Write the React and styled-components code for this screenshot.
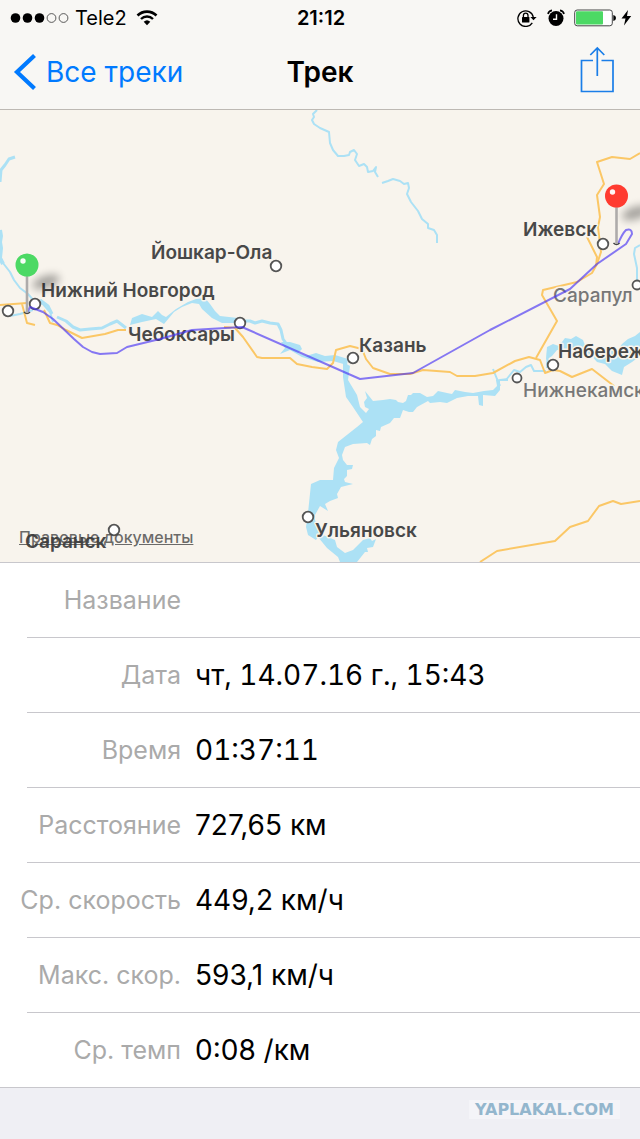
import React from 'react'
import styled, { createGlobalStyle } from 'styled-components'

const GlobalStyle = createGlobalStyle`
    * {
        box-sizing: border-box;
    }
    body {
        margin: 0;
        background: #efeff4;
        color: #000;
        font-family: Inter, "Liberation Sans", sans-serif;
    }
`

const rivers = [
    { width: 3, d: 'M15 47 L9 49 L5 55 L1 60 L0 72' },
    { width: 4, d: 'M0 120 L1 126 L0 132 L1 138 L0 148 L3 154' },
    { width: 2, d: 'M3 153 L10 162 L14 170 L20 178 L28 184 L34 191 L43 194 L50 202 L53 212 M10 206 L20 204 L33 200' },
    { width: 3, d: 'M40 190 L48 196 L52 204 M57 207 L66 211 L73 217 L80 220 L90 219 L102 218 L110 214 L117 211 L126 218' },
    { width: 2, d: 'M317 0 L313 4 L314 7 L312 10 L314 14 L320 18 L329 22 L330 33 L333 40 L338 46 L344 46 L349 45 L350 42 L354 40 L357 44 L355 50 L359 56 L364 54 L367 57 L368 62 L373 61 L376 57 L375 62 L378 67' },
    { width: 2, d: 'M382 73 L388 71 L393 69 L400 71 L404 74 L408 73 L409 78 L407 84 L411 92 L418 101 L422 109 L428 114 L428 118 L434 120 L437 125 L437 133' },
    { width: 3, d: 'M240 211 L250 211 L255 213 L262 211 L270 213 L278 214 L281 220 L283 229 L288 236' },
    { width: 2, d: 'M493 259 L497 269 L500 276 M506 270 L514 260 L520 262 L526 257 L531 255 L534 261 L546 261 M548 240 L547 258' },
    { width: 2, d: 'M640 135 L635 138 L634 144 L637 158 L637 171' },
]

const reservoirs = [
    'M130 215 L132 208 L142 204 L152 207 L158 201 L162 205 L166 207 L176 199 L188 192 L196 189 L205 188 L210 194 L215 201 L220 206 L238 208 L242 213 L222 213 L212 208 L202 199 L199 194 L192 193 L182 197 L174 202 L164 214 L156 209 L142 212 Z',
    'M280 244 L285 238 L281 232 L290 232 L300 235 L302 239 L298 243 L306 246 L316 243 L325 246 L335 245 L348 249 L347 255 L333 251 L318 252 L302 247 L290 240 Z',
    `M343 252 L343 267 L346 287 L353 297 L363 312 L357 317 L338 332 L336 340 L339 348 L334 358 L333 370
    L320 370 L311 374 L308 403 L306 417 L308 425 L316 430 L318 427 L327 438 L338 447 L340 452 L357 452
    L365 442 L368 442 L367 438 L373 437 L376 429 L372 431 L370 428 L363 430 L353 440 L345 443 L337 437
    L335 430 L323 425 L315 410 L315 405 L320 396 L328 401 L325 394 L330 391 L338 388 L337 384 L341 377
    L353 374 L345 372 L344 369 L347 366 L347 360 L352 359 L353 355 L347 355 L343 350 L342 345 L345 337
    L353 334 L367 333 L370 335 L372 329 L376 326 L376 320 L380 321 L381 317 L390 313 L394 308 L400 308
    L403 300 L409 302 L413 302 L417 297 L428 291 L430 293 L440 292 L447 293 L457 288 L468 286 L478 286
    L479 295 L483 296 L483 285 L495 286 L500 280 L500 271 L508 271 L508 268 L500 269 L496 270 L497 276
    L493 280 L484 281 L473 283 L465 282 L455 280 L452 284 L447 283 L438 281 L433 286 L427 287 L420 283
    L413 283 L411 285 L408 285 L406 291 L403 293 L398 292 L396 290 L390 289 L383 290 L373 291 L369 286
    L365 281 L367 288 L364 292 L365 297 L369 299 L366 303 L360 297 L357 285 L348 270 L350 256 Z`,
    'M546 250 L547 237 L553 234 L559 236 L565 228 L571 229 L576 226 L583 230 L586 238 L600 242 L618 240 L622 234 L628 229 L635 226 L640 222 L640 246 L632 252 L624 257 L622 265 L612 261 L605 254 L597 252 L590 244 L575 239 L557 240 L552 246 Z',
]

const roads = [
    'M0 195 L27 193 M22 194 L27 213 L35 215',
    'M44 200 L50 213 L57 215 L66 220 L82 228 L105 224 L118 220 L126 220',
    'M224 217 L235 218 L243 227 L257 247 L262 248 L290 248 L297 254 L312 257 L327 259 L333 253 L336 240 L350 236 L362 239 L366 249 L373 258 L390 264 L410 264 L423 260 L450 262 L457 266 L475 266 L493 263 L515 251 L529 247 L540 250 L545 263 L553 260 L560 261 L572 267 L592 259 L614 276',
    'M536 248 L557 211 L542 185 L543 180 L577 172 L592 163 L597 154 L601 142 L598 117 L600 107 L597 85 L604 74 L597 52 L612 47 L630 49 L640 43',
    'M587 127 L597 147 L596 156',
    'M480 452 L497 441 L555 431 L570 417 L588 411 L599 396 L613 391 L621 394 L640 391',
]

const track = 'M27 203 L30 197 L43 202 L53 209 L74 229 L83 237 L92 242 L100 244 L117 243 L127 237 L160 229 L192 220 L242 217 L360 269 L413 263 L490 220 L570 179 L597 154 L626 134 L632 124 Q632 118 626 120 Q622 124 618 134'

const cities = [
    { x: 8, y: 201 },
    { x: 35, y: 194, name: 'Нижний Новгород', tx: 41, ty: 187 },
    { x: 276, y: 156, name: 'Йошкар-Ола', tx: 151, ty: 149 },
    { x: 240, y: 213, name: 'Чебоксары', tx: 128, ty: 231 },
    { x: 353, y: 248, name: 'Казань', tx: 359, ty: 242 },
    { x: 603, y: 134, name: 'Ижевск', tx: 523, ty: 126 },
    { x: 637, y: 175, name: 'Сарапул', tx: 553, ty: 192, small: true },
    { x: 553, y: 255, name: 'Набережные Челны', tx: 558, ty: 248 },
    { x: 517, y: 268, name: 'Нижнекамск', tx: 523, ty: 287, small: true },
    { x: 308, y: 407, name: 'Ульяновск', tx: 315, ty: 427 },
    { x: 114, y: 420, name: 'Саранск', tx: 25, ty: 438 },
]

const details = [
    { label: 'Дата', value: 'чт, 14.07.16 г., 15:43', tabular: true },
    { label: 'Время', value: '01:37:11', tabular: true },
    { label: 'Расстояние', value: '727,65 км' },
    { label: 'Ср. скорость', value: '449,2 км/ч' },
    { label: 'Макс. скор.', value: '593,1 км/ч' },
    { label: 'Ср. темп', value: '0:08 /км' },
]

function StatusBar() {
    return (
        <StatusWrapper>
            <StatusGroup>
                <svg width="60" height="12" viewBox="0 0 60 12">
                    <circle cx="5.500" cy="6" r="4.800" />
                    <circle cx="17.500" cy="6" r="4.800" />
                    <circle cx="29.500" cy="6" r="4.800" />
                    <circle cx="41.500" cy="6" r="4.400" fill="none" stroke="#333" strokeWidth=".8" />
                    <circle cx="53.500" cy="6" r="4.400" fill="none" stroke="#333" strokeWidth=".8" />
                </svg>
                <Carrier>Tele2</Carrier>
                <svg width="22" height="17" viewBox="0 0 22 17" fill="none" stroke="#000">
                    <path d="M1.500 6.500 A13.500 13.500 0 0 1 20.500 6.500" strokeWidth="2.600" />
                    <path d="M5 10 A8.600 8.600 0 0 1 17 10" strokeWidth="2.400" />
                    <path d="M7.700 12.700 A4.800 4.800 0 0 1 14.300 12.700 L11 16.200 Z" fill="#000" stroke="none" />
                </svg>
            </StatusGroup>
            <Clock>21:12</Clock>
            <StatusGroup $end>
                <svg width="20" height="18" viewBox="0 0 20 18">
                    <path d="M15.300 13.800 A7.800 7.800 0 1 1 16.300 8" fill="none" stroke="#000" strokeWidth="1.300" />
                    <path d="M13.400 8 H19.600 L16.500 11.200 Z" />
                    <rect x="5" y="8" width="7.400" height="5.600" rx=".6" />
                    <path d="M6.400 8.500 V6.400 A2.300 2.300 0 0 1 11 6.400 V8.500" fill="none" stroke="#000" strokeWidth="1.300" />
                </svg>
                <Alarm width="18" height="18" viewBox="0 0 18 18">
                    <circle cx="9" cy="9.500" r="7.500" />
                    <path d="M9.500 5.200 V10.200 H6" fill="none" stroke="#f8f7f4" strokeWidth="1.400" />
                    <path d="M1 5 Q1.500 2 5 1.400 M17 5 Q16.500 2 13 1.400" fill="none" stroke="#000" strokeWidth="1.600" />
                </Alarm>
                <svg width="43" height="18" viewBox="0 0 43 18">
                    <rect x=".7" y="1" width="37.600" height="15.800" rx="2.500" fill="#fff" stroke="#444" />
                    <rect x="2" y="2.300" width="27" height="13.200" rx="1" fill="#4cd964" />
                    <path d="M39.300 6 Q42 6.500 42 9 Q42 11.500 39.300 12 Z" />
                </svg>
                <Bolt width="11" height="17" viewBox="0 0 11 17">
                    <path d="M7 1 L.5 9.600 H4.500 L3 16.500 L10.200 7 H6 Z" />
                </Bolt>
            </StatusGroup>
        </StatusWrapper>
    )
}

function Pin({ x, y, color }) {
    return (
        <g>
            <ellipse cx={x + 19} cy={y + 17} rx="14" ry="6" fill="#000" opacity=".35" filter="url(#pin-shadow)" transform={`rotate(-18 ${x + 19} ${y + 17})`} />
            <path d={`M${x - 3} ${y + 47} Q${x} ${y + 50} ${x + 3} ${y + 47}`} fill="none" stroke="#444" strokeWidth="1.500" />
            <path d={`M${x} ${y + 9} V${y + 48}`} stroke="#aeabaa" strokeWidth="2.600" />
            <circle cx={x} cy={y} r="11.500" fill={color} />
            <circle cx={x - 4} cy={y - 4} r="2.700" fill="#fff" opacity=".95" />
        </g>
    )
}

function TrackMap() {
    return (
        <MapWrapper>
            <MapDrawing viewBox="0 0 640 452" preserveAspectRatio="xMidYMid slice">
                <defs>
                    <filter id="pin-shadow" x="-50%" y="-100%" width="200%" height="300%">
                        <feGaussianBlur stdDeviation="4" />
                    </filter>
                </defs>
                {reservoirs.map(d => <path key={d} d={d} fill="#ace1f5" />)}
                {rivers.map(({ d, width }) => (
                    <path key={d} d={d} fill="none" stroke="#ace1f5" strokeWidth={width} strokeLinejoin="round" />
                ))}
                {roads.map(d => (
                    <path key={d} d={d} fill="none" stroke="#fbc766" strokeWidth="2" strokeLinejoin="round" />
                ))}
                {cities.map(({ x, y, small }) => (
                    <circle key={x} cx={x} cy={y} r={small ? 4.5 : 5.3} fill="#fff" stroke="#555" strokeWidth="1.800" />
                ))}
                {cities.filter(city => city.name).map(({ name, tx, ty, small }) => (
                    <CityName key={name} x={tx} y={ty} $small={small}>{name}</CityName>
                ))}
                <path d={track} fill="none" stroke="#4733f5" strokeOpacity=".65" strokeWidth="2" strokeLinejoin="round" />
                <Pin x={27} y={155} color="#4cd964" />
                <Pin x={616.5} y={86} color="#ff3b30" />
            </MapDrawing>
            <LegalLink href="#legal">Правовые документы</LegalLink>
        </MapWrapper>
    )
}

export default function App() {
    return (
        <Page>
            <GlobalStyle />
            <Header>
                <StatusBar />
                <NavBar>
                    <BackButton type="button">
                        <svg width="24" height="38" viewBox="0 0 24 38" fill="none" stroke="#007aff" strokeWidth="4.200">
                            <path d="M21.500 2.500 L4 19 L21.500 35.500" />
                        </svg>
                        Все треки
                    </BackButton>
                    <Title>Трек</Title>
                    <ShareButton type="button" aria-label="Поделиться">
                        <svg width="35" height="48" viewBox="0 0 35 48" fill="none" stroke="#1a7ee8" strokeWidth="1.700">
                            <path d="M13 14.500 H1.500 V45.500 H33 V14.500 H21.500" />
                            <path d="M17.300 30 V2 M10.300 9 L17.300 2 L24.300 9" />
                        </svg>
                    </ShareButton>
                </NavBar>
            </Header>
            <TrackMap />
            <Details>
                <Row>
                    <Label htmlFor="track-name">Название</Label>
                    <NameInput id="track-name" type="text" />
                </Row>
                {details.map(({ label, value, tabular }) => (
                    <React.Fragment key={label}>
                        <Separator />
                        <Row>
                            <Label as="span">{label}</Label>
                            <Value $tabular={tabular}>{value}</Value>
                        </Row>
                    </React.Fragment>
                ))}
            </Details>
            <Footer>
                <Watermark>YAPLAKAL.COM</Watermark>
            </Footer>
        </Page>
    )
}

const Page = styled.div`
    display: flex;
    flex-direction: column;
    min-height: 100vh;
`

const Header = styled.header`
    background: #f8f7f4;
    border-bottom: 1px solid #bdb9b3;
`

const StatusWrapper = styled.div`
    display: grid;
    grid-template-columns: 1fr auto 1fr;
    align-items: center;
    height: 35px;
    padding: 0 8px 0 10px;
`

const StatusGroup = styled.div`
    display: flex;
    align-items: center;
    justify-content: ${props => props.$end ? 'flex-end' : 'flex-start'};
`

const Carrier = styled.span`
    margin: 0 9px 0 5px;
    font-size: 20px;
    line-height: 24px;
`

const Clock = styled.span`
    font-size: 20px;
    line-height: 24px;
    font-weight: 600;
`

const Alarm = styled.svg`
    margin: 0 9px 0 10px;
`

const Bolt = styled.svg`
    margin-left: 4px;
`

const NavBar = styled.nav`
    display: grid;
    grid-template-columns: 1fr auto 1fr;
    align-items: center;
    height: 74px;
    padding: 0 13px;
`

const BackButton = styled.button`
    display: flex;
    align-items: center;
    gap: 9px;
    justify-self: start;
    padding: 0;
    border: 0;
    background: none;
    color: #007aff;
    font: inherit;
    font-size: 28px;
    line-height: 36px;
`

const Title = styled.h1`
    margin: 0;
    font-size: 28px;
    line-height: 36px;
    font-weight: 600;
`

const ShareButton = styled.button`
    display: flex;
    justify-self: end;
    padding: 0 12px 4px;
    border: 0;
    background: none;
`

const MapWrapper = styled.section`
    position: relative;
    height: 453px;
    background: #f8f4ed;
    border-bottom: 1px solid #c8c7cc;
`

const MapDrawing = styled.svg`
    display: block;
    width: 100%;
    height: 100%;
`

const CityName = styled.text`
    font-size: 19px;
    font-weight: ${props => props.$small ? 500 : 600};
    fill: ${props => props.$small ? '#777' : '#484848'};
    stroke: #f8f4ed;
    stroke-width: 3px;
    stroke-linejoin: round;
    paint-order: stroke;
`

const LegalLink = styled.a`
    position: absolute;
    left: 19px;
    bottom: 15px;
    color: rgba(60, 60, 60, .75);
    font-size: 16px;
    line-height: 20px;
    font-weight: 500;
`

const Details = styled.section`
    background: #fff;
`

const Row = styled.div`
    display: flex;
    align-items: center;
    gap: 14px;
    height: 74px;
`

const Separator = styled.hr`
    height: 1px;
    margin: 0 0 0 27px;
    border: 0;
    background: #c8c7cc;
`

const Label = styled.label`
    flex: 0 0 181px;
    color: #aaa;
    font-size: 25px;
    line-height: 32px;
    text-align: right;
`

const Value = styled.span`
    font-size: 28px;
    line-height: 36px;
    font-variant-numeric: ${props => props.$tabular ? 'tabular-nums' : 'normal'};
`

const NameInput = styled.input`
    flex: 1;
    min-width: 0;
    padding: 0;
    border: 0;
    outline: 0;
    background: none;
    font: inherit;
    font-size: 28px;
    line-height: 36px;
`

const Footer = styled.footer`
    display: flex;
    flex: 1;
    align-items: flex-start;
    justify-content: flex-end;
    min-height: 52px;
    padding: 12px 20px 0;
    border-top: 1px solid #c8c7cc;
`

const Watermark = styled.span`
    padding: 0 6px;
    background: #f4f4f8;
    color: #93b6cd;
    font-family: "DejaVu Sans", sans-serif;
    font-size: 16px;
    line-height: 19px;
    font-weight: 700;
`
